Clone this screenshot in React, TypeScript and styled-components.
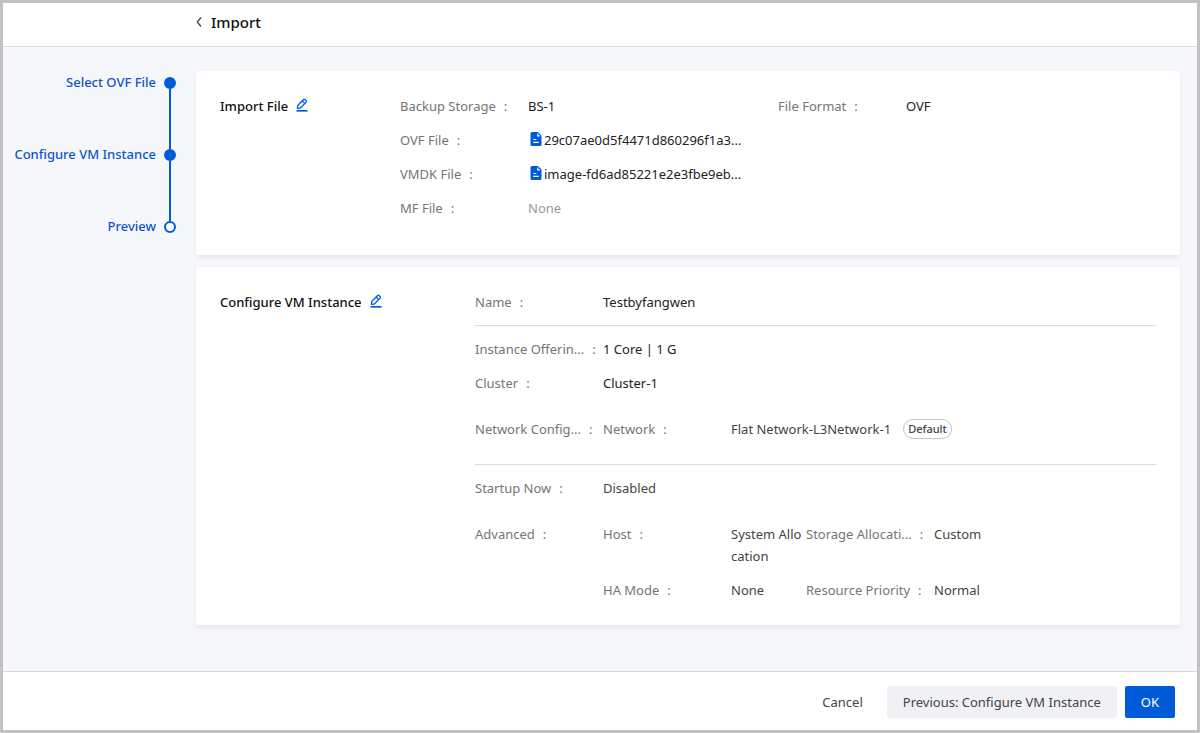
import React from "react";
import styled, { createGlobalStyle } from "styled-components";

const GlobalStyle = createGlobalStyle`
  *, *::before, *::after { box-sizing: border-box; }
  body {
    margin: 0;
    font-family: "Noto Sans", "Open Sans", sans-serif;
    font-size: 13px;
    line-height: 22px;
    color: #222;
  }
  button { font: inherit; cursor: pointer; }
  h1, h2, dl, dd, ol { margin: 0; padding: 0; }
`;

const Page = styled.div`
  display: flex;
  flex-direction: column;
  min-height: 100vh;
  border: 3px solid #c2c2c2;
  background: #f5f7fb;
`;

const Header = styled.header`
  display: flex;
  align-items: center;
  gap: 8px;
  height: 44px;
  padding: 0 16px 6px 192px;
  background: #fff;
  border-bottom: 1px solid #d8d8e0;
`;

const BackButton = styled.button`
  display: flex;
  padding: 0;
  border: 0;
  background: none;
  color: #444;
`;

const PageTitle = styled.h1`
  font-size: 15px;
  font-weight: 500;
  color: #111;
`;

const Body = styled.div`
  display: flex;
  flex: 1;
`;

const Steps = styled.ol`
  display: flex;
  flex: none;
  flex-direction: column;
  width: 193px;
  padding: 24px 20px 0 0;
  list-style: none;
`;

const StepItem = styled.li`
  display: flex;
  justify-content: flex-end;
  gap: 8px;
  color: #1054cc;
  font-weight: 500;
  white-space: nowrap;
`;

const StepTrack = styled.span`
  display: flex;
  flex-direction: column;
  align-items: center;
  padding-top: 6px;
`;

const StepDot = styled.span<{ $filled: boolean }>`
  width: 12px;
  height: 12px;
  border: 2px solid #005bd9;
  border-radius: 50%;
  background: ${(p) => (p.$filled ? "#005bd9" : "#fff")};
`;

const StepLine = styled.span`
  width: 2px;
  height: 60px;
  margin-bottom: -6px;
  background: #005bd9;
`;

const Main = styled.main`
  display: flex;
  flex: 1;
  flex-direction: column;
  gap: 12px;
  min-width: 0;
  padding: 24px 17px 46px 0;
`;

const Card = styled.section`
  display: flex;
  padding: 24px;
  background: #fff;
  border-radius: 2px;
  box-shadow: 0 2px 4px rgba(0, 0, 0, 0.08);
`;

const CardHeading = styled.div<{ $width: number }>`
  display: flex;
  flex: none;
  align-items: center;
  align-self: flex-start;
  gap: 8px;
  width: ${(p) => p.$width}px;
`;

const CardTitle = styled.h2`
  font-size: 13px;
  line-height: 22px;
  font-weight: 500;
  color: #111;
`;

const EditButton = styled.button`
  display: flex;
  padding: 0 0 2px;
  border: 0;
  background: none;
  color: #005bd9;
`;

const FileFields = styled.dl`
  display: grid;
  flex: 1;
  grid-template-columns: 1fr 1fr;
  row-gap: 12px;
  padding-bottom: 12px;
`;

const FullRow = styled.div`
  grid-column: 1 / -1;
`;

const Sections = styled.div`
  flex: 1;
  min-width: 0;
`;

const FieldGroup = styled.dl<{ $gap: number }>`
  display: flex;
  flex-direction: column;
  gap: ${(p) => p.$gap}px;
  padding: 12px 0;

  &:first-child { padding-top: 0; }
  &:last-child { padding-bottom: 0; }
  & + & { border-top: 1px solid #dcdcdc; }
`;

const FieldRow = styled.div<{ $spaced?: boolean }>`
  display: flex;
  padding: ${(p) => (p.$spaced ? "12px 0" : "0")};
`;

const Label = styled.dt`
  display: flex;
  flex: none;
  gap: 8px;
  width: 128px;
  color: #757575;
  white-space: nowrap;
`;

const Value = styled.dd<{ $tone?: "muted" | "soft" }>`
  flex: 1;
  min-width: 0;
  color: ${(p) => (p.$tone === "muted" ? "#999" : p.$tone === "soft" ? "#444" : "#222")};
`;

const FileValue = styled.span`
  display: flex;
  align-items: center;
  gap: 2px;
  padding-left: 2px;

  svg { margin-bottom: 2px; }
`;

const NestedFields = styled.dl<{ $columns: string }>`
  display: grid;
  grid-template-columns: ${(p) => p.$columns};
  row-gap: 12px;

  dd { word-break: break-all; }
`;

const NetworkValue = styled.span`
  display: flex;
  align-items: center;
  gap: 12px;
`;

const Badge = styled.span`
  height: 20px;
  padding: 0 4px;
  border: 1px solid #c4c4c4;
  border-radius: 10px;
  font-size: 11px;
  line-height: 18px;
  font-weight: 500;
`;

const Footer = styled.footer`
  display: flex;
  justify-content: flex-end;
  gap: 8px;
  padding: 14px 22px 12px;
  background: #fff;
  border-top: 1px solid #d8d8e0;
`;

const FooterButton = styled.button<{ $kind: "text" | "default" | "primary" }>`
  height: 32px;
  padding: 0 16px;
  border: 0;
  border-radius: 2px;
  background: ${(p) =>
    p.$kind === "primary" ? "#005bd9" : p.$kind === "default" ? "#f0f1f5" : "transparent"};
  color: ${(p) => (p.$kind === "primary" ? "#fff" : "#444")};
`;

const ChevronLeft = () => (
  <svg width="8" height="12" viewBox="0 0 8 12" fill="none" stroke="currentColor" strokeWidth="1.3" aria-hidden="true">
    <path d="M6 1.5 2.3 6 6 10.5" />
  </svg>
);

const PencilIcon = () => (
  <svg width="12" height="14" viewBox="0 0 12 14" fill="none" stroke="currentColor" strokeWidth="1.3" aria-hidden="true">
    <path d="M1.4 10.3 1.7 7.5 7.6 1.5q.7-.6 1.4 0l1.2 1.2q.6.7 0 1.4L4.3 10Z" strokeLinejoin="round" />
    <path d="m6.2 3 2.6 2.6" />
    <path d="M.5 12.8h11" strokeWidth="1.7" />
  </svg>
);

const FileIcon = () => (
  <svg width="12" height="14" viewBox="0 0 12 14" aria-hidden="true">
    <path fill="#005bd9" d="M2 0h6l3.5 3.5v9a1.5 1.5 0 0 1-1.5 1.5H2a1.5 1.5 0 0 1-1.5-1.5v-11A1.5 1.5 0 0 1 2 0Z" />
    <path stroke="#fff" strokeWidth="1.2" fill="none" d="M7.8 1.6v2.2h2.2M3.3 7.5h3M3.3 10.3h5.4" />
  </svg>
);

type FieldProps = {
  label: string;
  children: React.ReactNode;
  spaced?: boolean;
  tone?: "muted" | "soft";
};

const Field = ({ label, children, spaced, tone }: FieldProps) => (
  <FieldRow $spaced={spaced}>
    <Label>
      <span>{label}</span>
      <span>:</span>
    </Label>
    <Value $tone={tone}>{children}</Value>
  </FieldRow>
);

const FileLabel = ({ name }: { name: string }) => (
  <FileValue>
    <FileIcon />
    <span>{name}</span>
  </FileValue>
);

const Heading = ({ title, width }: { title: string; width: number }) => (
  <CardHeading $width={width}>
    <CardTitle>{title}</CardTitle>
    <EditButton type="button" aria-label={`Edit ${title}`}>
      <PencilIcon />
    </EditButton>
  </CardHeading>
);

const steps = [
  { name: "Select OVF File", filled: true },
  { name: "Configure VM Instance", filled: true },
  { name: "Preview", filled: false },
];

export default function App() {
  return (
    <>
      <GlobalStyle />
      <Page>
        <Header>
          <BackButton type="button" aria-label="Back">
            <ChevronLeft />
          </BackButton>
          <PageTitle>Import</PageTitle>
        </Header>
        <Body>
          <Steps>
            {steps.map((step, index) => (
              <StepItem key={step.name}>
                <span>{step.name}</span>
                <StepTrack>
                  <StepDot $filled={step.filled} />
                  {index < steps.length - 1 && <StepLine />}
                </StepTrack>
              </StepItem>
            ))}
          </Steps>
          <Main>
            <Card>
              <Heading title="Import File" width={180} />
              <FileFields>
                <Field label="Backup Storage">BS-1</Field>
                <Field label="File Format">OVF</Field>
                <FullRow>
                  <Field label="OVF File">
                    <FileLabel name="29c07ae0d5f4471d860296f1a3..." />
                  </Field>
                </FullRow>
                <FullRow>
                  <Field label="VMDK File">
                    <FileLabel name="image-fd6ad85221e2e3fbe9eb..." />
                  </Field>
                </FullRow>
                <FullRow>
                  <Field label="MF File" tone="muted">None</Field>
                </FullRow>
              </FileFields>
            </Card>
            <Card>
              <Heading title="Configure VM Instance" width={255} />
              <Sections>
                <FieldGroup $gap={12}>
                  <Field label="Name">Testbyfangwen</Field>
                </FieldGroup>
                <FieldGroup $gap={12}>
                  <Field label="Instance Offerin...">1 Core | 1 G</Field>
                  <Field label="Cluster">Cluster-1</Field>
                  <Field label="Network Config..." spaced>
                    <NestedFields $columns="1fr">
                      <Field label="Network" tone="soft">
                        <NetworkValue>
                          Flat Network-L3Network-1
                          <Badge>Default</Badge>
                        </NetworkValue>
                      </Field>
                    </NestedFields>
                  </Field>
                </FieldGroup>
                <FieldGroup $gap={24}>
                  <Field label="Startup Now" tone="soft">Disabled</Field>
                  <Field label="Advanced">
                    <NestedFields $columns="203px 1fr">
                      <Field label="Host" tone="soft">System Allocation</Field>
                      <Field label="Storage Allocati..." tone="soft">Custom</Field>
                      <Field label="HA Mode" tone="soft">None</Field>
                      <Field label="Resource Priority" tone="soft">Normal</Field>
                    </NestedFields>
                  </Field>
                </FieldGroup>
              </Sections>
            </Card>
          </Main>
        </Body>
        <Footer>
          <FooterButton type="button" $kind="text">Cancel</FooterButton>
          <FooterButton type="button" $kind="default">Previous: Configure VM Instance</FooterButton>
          <FooterButton type="button" $kind="primary">OK</FooterButton>
        </Footer>
      </Page>
    </>
  );
}
